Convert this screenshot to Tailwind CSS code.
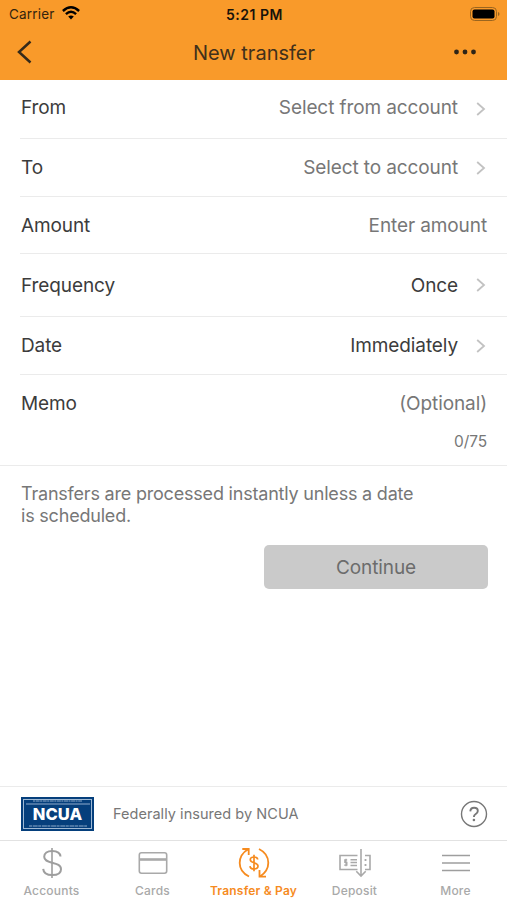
<!DOCTYPE html>
<html lang="en">
<head>
<meta charset="utf-8">
<title>New transfer</title>
<script src="https://cdn.jsdelivr.net/npm/@tailwindcss/browser@4"></script>
</head>
<body class="bg-white">
<div class="w-[507px] h-[900px] overflow-hidden flex flex-col bg-white font-['Inter',sans-serif] text-[#3c3c3c] whitespace-nowrap">
  <header class="h-20 shrink-0 bg-[#f99a2a]">
    <div class="h-7 grid grid-cols-3 items-center pl-[9px] pr-[7px] text-[13.5px] text-[#17120a]">
      <div class="flex items-center gap-[7px]">
        <span class="text-[#33240e] tracking-[0.2px]">Carrier</span>
        <svg class="w-[18px] h-[14px] -mt-[3px]" viewBox="0 0 18 14" fill="none" stroke="#000" stroke-width="2.4"><path d="M.9 5Q9-2.4 17.100 5"/><path d="M3.900 8.200Q9 3.500 14.100 8.200"/><path d="M9 13.500 6.200 10.600Q9 8.200 11.800 10.600Z" fill="#000" stroke="none"/></svg>
      </div>
      <span class="text-center font-semibold text-[14px] tracking-[0.5px]">5:21 PM</span>
      <svg class="w-[30px] h-[14px] justify-self-end -mt-px" viewBox="0 0 30 14"><rect x=".5" y=".5" width="26" height="13" rx="4" fill="none" stroke="#9a651f"/><rect x="2.500" y="2.500" width="22" height="9" rx="2" fill="#000"/><path d="M28 5v4q1.500-.7 1.500-2T28 5" fill="#9a651f"/></svg>
    </div>
    <div class="h-[52px] grid grid-cols-[60px_1fr_60px] items-center">
      <svg class="w-4 h-6 ml-4 -mt-[4px]" viewBox="0 0 16 24" fill="none" stroke="#352a1a" stroke-width="2.500"><path d="M14.500 1.500 3 12 14.500 22.500"/></svg>
      <h1 class="text-center text-[20px] leading-6 -mt-[3px] pl-px font-[430] text-[#41301b]">New transfer</h1>
      <svg class="w-6 h-6 ml-[6px] -mt-[4px]" viewBox="0 0 24 24" fill="#2d2417"><circle cx="3.500" cy="12" r="2.400"/><circle cx="12" cy="12" r="2.400"/><circle cx="20.500" cy="12" r="2.400"/></svg>
    </div>
  </header>
  <main class="grow flex flex-col text-[19px] leading-6 tracking-[-0.1px]">
    <div class="ml-5 pl-px pr-5 h-[59px] flex items-center pb-0.5 border-b border-[#ebebeb]"><span>From</span><span class="ml-auto text-[#777]">Select from account</span><svg class="ml-[18px] mt-0.5 w-[11px] h-4" viewBox="0 0 11 16" fill="none" stroke="#c2c2c2" stroke-width="1.800"><path d="M1.200 2 8 8 1.200 14"/></svg></div>
    <div class="ml-5 pl-px pr-5 h-[58px] flex items-center border-b border-[#ebebeb]"><span>To</span><span class="ml-auto text-[#777]">Select to account</span><svg class="ml-[18px] w-[11px] h-4" viewBox="0 0 11 16" fill="none" stroke="#c2c2c2" stroke-width="1.800"><path d="M1.200 2 8 8 1.200 14"/></svg></div>
    <div class="ml-5 pl-px pr-5 h-[57px] flex items-center pt-0.5 border-b border-[#ebebeb]"><span>Amount</span><span class="ml-auto text-[#777]">Enter amount</span></div>
    <div class="ml-5 pl-px pr-5 h-[63px] flex items-center pt-0.5 border-b border-[#ebebeb]"><span>Frequency</span><span class="ml-auto">Once</span><svg class="ml-[18px] -mt-0.5 w-[11px] h-4" viewBox="0 0 11 16" fill="none" stroke="#c2c2c2" stroke-width="1.800"><path d="M1.200 2 8 8 1.200 14"/></svg></div>
    <div class="ml-5 pl-px pr-5 h-[58px] flex items-center pt-px border-b border-[#ebebeb]"><span>Date</span><span class="ml-auto">Immediately</span><svg class="ml-[18px] -mt-px w-[11px] h-4" viewBox="0 0 11 16" fill="none" stroke="#c2c2c2" stroke-width="1.800"><path d="M1.200 2 8 8 1.200 14"/></svg></div>
    <div class="pl-[21px] pr-5 h-[91px] pt-[17px] border-b border-[#ebebeb]">
      <div class="flex justify-between"><span>Memo</span><span class="text-[#777]">(Optional)</span></div>
      <div class="mt-[14px] text-right text-[15.500px] text-[#777]">0/75</div>
    </div>
    <p class="pl-[21px] pt-[17px] text-[18px] leading-[22px] tracking-[-0.2px] text-[#777]"><span>Transfers are processed instantly unless a date</span><br><span>is scheduled.</span></p>
    <button class="self-end mr-[19px] mt-[18px] pt-0.5 w-[224px] h-11 rounded-[5px] bg-[#cacaca] text-[#6c6c6c]"><span>Continue</span></button>
  </main>
  <section class="h-[54px] shrink-0 border-t border-[#ebebeb] flex items-center pl-[21px] pr-[19px] text-[#777]">
    <div class="w-[73px] h-[34px] bg-[#053f7c] p-[2px]">
      <div class="h-full border border-[#9fb9d4] flex flex-col items-center justify-between text-white">
        <svg class="w-[64px] h-[5px] shrink-0" viewBox="0 0 64 5" stroke="#8faccb"><path d="M7 1H56" stroke-dasharray="2 .6 4 .5"/><path d="M0 4H64" stroke-width="1.200"/></svg>
        <span class="text-[16.500px] leading-[17px] pt-px font-extrabold">NCUA</span>
        <svg class="w-[64px] h-[4px] shrink-0" viewBox="0 0 64 4" stroke="#8faccb"><path d="M3 2H61" stroke-dasharray="3 .7 5 .5"/></svg>
      </div>
    </div>
    <span class="ml-[19px] text-[14.500px] tracking-[0.04px]">Federally insured by NCUA</span>
    <svg class="ml-auto w-[28px] h-[28px]" viewBox="0 0 28 28" fill="none" stroke="#777" stroke-width="1.400"><circle cx="14" cy="14" r="12.500"/><path d="M10.300 11.300C10.500 8.800 12 7.800 14.100 7.800C16.300 7.800 17.800 9.100 17.800 11C17.800 12.800 16.800 13.500 15.500 14.300C14.200 15.100 13.900 15.700 13.900 17" stroke-width="1.900"/><circle cx="13.900" cy="20" r="1.300" fill="#777" stroke="none"/></svg>
  </section>
  <nav class="h-[60px] shrink-0 border-t border-[#e2e2e2] grid grid-cols-[101px_101px_101px_101px_101px] pl-px text-[12px] leading-4 font-medium tracking-[0.2px] text-[#a9a9a9]">
    <div class="flex flex-col items-center pt-1.5 gap-1"><svg class="w-8 h-8" viewBox="0 0 32 32" fill="none" stroke="#9e9e9e" stroke-width="2"><path d="M16 1V31" stroke-width="1.600"/><path d="M24.500 9.500C24.200 5.800 21.200 3.900 16.100 3.900C11.300 3.900 8.200 6.300 8.200 9.700C8.200 13.400 11.300 14.500 16 15.700C21.100 17 25 18.100 25 22.200C25 26 21.500 28.100 16.300 28.100C10.900 28.100 7.500 25.700 7.200 21.800"/></svg><span>Accounts</span></div>
    <div class="flex flex-col items-center pt-1.5 gap-1"><svg class="w-8 h-8" viewBox="0 0 32 32" fill="none" stroke="#a9a9a9" stroke-width="1.600"><rect x="2.300" y="5.800" width="27.400" height="20.400" rx="2.200"/><path d="M2 12.500H30" stroke-width="2.600"/></svg><span>Cards</span></div>
    <div class="flex flex-col items-center pt-1.5 gap-1 text-[#f68b1f] font-semibold"><svg class="w-8 h-8" viewBox="0 0 32 32" fill="none" stroke="#f68b1f" stroke-width="1.800"><path d="M11 29.500C5 26.500 1.700 21.500 1.700 16C1.700 10.500 4 6 10 2.300M4.300 2H10.700V8"/><path d="M21 2C27 5 30.300 10 30.300 15.800C30.300 21.500 27.500 26 22 29.500M21.500 23V29.700H28"/><path d="M16 7.800V24.300M19.700 12.500C19.500 10.800 18.300 10 16 10C13.800 10 12.300 11 12.300 12.800C12.300 14.700 13.900 15.200 16 15.800C18.300 16.400 20 17.200 20 19.100C20 21 18.400 22 16 22C13.600 22 12.100 20.900 12 19.100" stroke-width="1.700"/></svg><span>Transfer &amp; Pay</span></div>
    <div class="flex flex-col items-center pt-1.5 gap-1"><svg class="w-8 h-8" viewBox="0 0 32 32" fill="none" stroke="#a9a9a9" stroke-width="1.600"><path d="M18.500 8.500H1V22.500H18.500M26 8.500H31V22.500H26M22 2V29M17.300 24.300 22 29 26.700 24.300"/><path d="M11.500 12.700H18M11.500 15.500H18M11.500 18.500H18" stroke-width="1.400"/><path d="M8.200 12.800H5.800V15.400H7.900V18.200H5.200M7 11.700V19.300" stroke-width="1.200"/><path d="M26.500 12V14M26.500 17V19" stroke-width="1.800"/></svg><span>Deposit</span></div>
    <div class="flex flex-col items-center pt-1.5 gap-1"><svg class="w-8 h-8" viewBox="0 0 32 32" stroke="#9e9e9e" stroke-width="1.700"><path d="M2 8.500H30M2 16H30M2 23.500H30"/></svg><span>More</span></div>
  </nav>
</div>
</body>
</html>
